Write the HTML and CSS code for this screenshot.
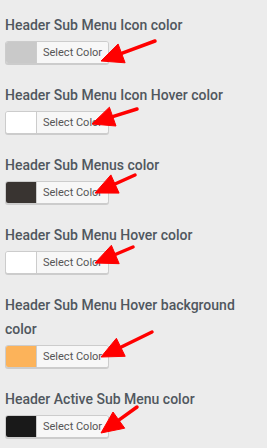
FILE: index.html
```html
<!DOCTYPE html>
<html>
<head>
<meta charset="utf-8">
<link rel="stylesheet" href="styles.css">
</head>
<body>
<div class="panel">
  <div class="field">
    <span class="label">Header Sub Menu Icon color</span>
    <button class="color-result"><span class="swatch swatch-grey"></span><span class="result-text">Select Color</span></button>
  </div>
  <div class="field">
    <span class="label">Header Sub Menu Icon Hover color</span>
    <button class="color-result"><span class="swatch swatch-white"></span><span class="result-text">Select Color</span></button>
  </div>
  <div class="field">
    <span class="label">Header Sub Menus color</span>
    <button class="color-result"><span class="swatch swatch-dark"></span><span class="result-text">Select Color</span></button>
  </div>
  <div class="field">
    <span class="label">Header Sub Menu Hover color</span>
    <button class="color-result"><span class="swatch swatch-white"></span><span class="result-text">Select Color</span></button>
  </div>
  <div class="field">
    <span class="label">Header Sub Menu Hover background color</span>
    <button class="color-result"><span class="swatch swatch-orange"></span><span class="result-text">Select Color</span></button>
  </div>
  <div class="field">
    <span class="label">Header Active Sub Menu color</span>
    <button class="color-result"><span class="swatch swatch-black"></span><span class="result-text">Select Color</span></button>
  </div>
</div>
<svg class="annotations" width="267" height="448" viewBox="0 0 267 448" aria-hidden="true">
  <g class="arrow">
    <line x1="155" y1="41" x2="121.6" y2="53.4"/>
    <polygon points="101,61 125.1,62.8 118.1,44"/>
  </g>
  <g class="arrow">
    <line x1="137" y1="109" x2="112.7" y2="116.6"/>
    <polygon points="92,124 116,126 109.4,107.2"/>
  </g>
  <g class="arrow">
    <line x1="135" y1="175" x2="115" y2="184"/>
    <polygon points="95,193 119.1,193.1 110.9,174.9"/>
  </g>
  <g class="arrow">
    <line x1="133" y1="247" x2="115.3" y2="254.5"/>
    <polygon points="95,263 119.2,263.7 111.4,245.3"/>
  </g>
  <g class="arrow">
    <line x1="152" y1="332" x2="120.8" y2="347.3"/>
    <polygon points="101,357 125.2,356.3 116.4,338.3"/>
  </g>
  <g class="arrow">
    <line x1="137" y1="407" x2="118.8" y2="420.1"/>
    <polygon points="101,433 124.7,428.2 113,412"/>
  </g>
</svg>
</body>
</html>
```
FILE: styles.css
```css
html, body {
  margin: 0;
  padding: 0;
  background: #ececec;
}
body {
  position: relative;
  width: 267px;
  height: 448px;
  overflow: hidden;
  font-family: Roboto, "Liberation Sans", sans-serif;
}
.panel {
  display: flex;
  flex-direction: column;
  padding: 13px 10px 0 5px;
}
.field {
  display: flex;
  flex-direction: column;
  align-items: flex-start;
  gap: 4px;
  margin-bottom: 19px;
}
.label {
  font-size: 14px;
  line-height: 24px;
  font-weight: 500;
  color: #50575e;
}
.color-result {
  display: inline-flex;
  align-items: stretch;
  height: 23px;
  padding: 0;
  margin: 0;
  border: 1px solid #cccccc;
  border-radius: 3px;
  background: #f7f7f7;
  box-shadow: 0 1px 0 #cccccc;
  overflow: hidden;
  font-family: inherit;
  cursor: pointer;
}
.swatch {
  width: 30px;
  flex: none;
}
.swatch-grey { background: #c9c9c9; }
.swatch-white { background: #ffffff; }
.swatch-dark { background: #393431; }
.swatch-orange { background: #fcb35a; }
.swatch-black { background: #191919; }
.result-text {
  display: flex;
  align-items: center;
  padding: 0 6px;
  border-left: 1px solid #cccccc;
  background: #f7f7f7;
  color: #555555;
  font-size: 11px;
}
.annotations {
  position: absolute;
  left: 0;
  top: 0;
  pointer-events: none;
}
.arrow line {
  stroke: #ff0000;
  stroke-width: 3.5;
  stroke-linecap: round;
}
.arrow polygon {
  fill: #ff0000;
  stroke: #ff0000;
  stroke-width: 1;
  stroke-linejoin: round;
}
```
